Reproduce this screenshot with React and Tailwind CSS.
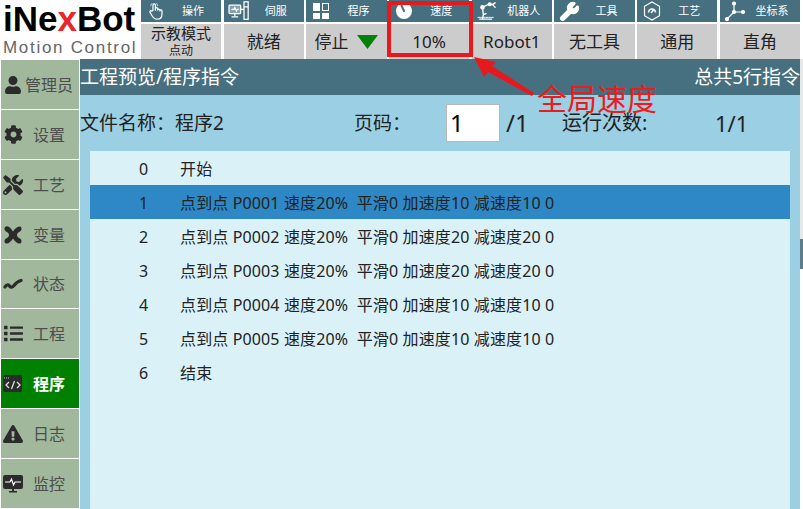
import React from 'react';
import { FaUser, FaCog, FaTools, FaExclamationTriangle, FaList } from 'react-icons/fa';
import { Wrench } from 'lucide-react';

const font = "font-['Noto_Sans','Noto_Sans_CJK_SC',sans-serif]";

const HandIcon = () => (
  <svg width="18" height="20" viewBox="0 0 24 24" fill="none" stroke="#fff" strokeWidth="1.6" strokeLinejoin="round" strokeLinecap="round">
    <path d="M8 11V4a1.6 1.6 0 0 1 3.2 0v7l0-2a1.5 1.5 0 0 1 3 0v2a1.5 1.5 0 0 1 3 0v1a1.4 1.4 0 0 1 2.8 0v4c0 4-2.5 7-6.5 7s-5-1.500-7-5l-2.500-4.500c-.8-1.500 1.200-2.700 2.300-1.300z" />
    <path d="M5 5a5 5 0 0 1 1.500-3M14 5a5 5 0 0 0-1-3" strokeWidth="1" />
  </svg>
);

const ServoIcon = () => (
  <svg width="22" height="20" viewBox="0 0 26 24" fill="none" stroke="#fff" strokeWidth="1.500">
    <rect x="1" y="5" width="14" height="10" rx="1" fill="#fff" fillOpacity=".35" />
    <path d="M4 10h3l1-2 2 4 1-2h2M8 15v3M4 19h8" />
    <rect x="19" y="1" width="5" height="21" />
    <path d="M19 7h5M15 10h4" />
  </svg>
);

const GridIcon = () => (
  <div className="grid grid-cols-2 gap-[2px] w-[16px] h-[16px]">
    <div className="bg-white" />
    <div className="border border-white" />
    <div className="bg-white" />
    <div className="bg-white" />
  </div>
);

const GaugeIcon = () => (
  <svg width="18" height="18" viewBox="0 0 18 18">
    <circle cx="9" cy="9" r="8" fill="#fff" />
    <path d="M9 9L6.500 3.500" stroke="#467080" strokeWidth="2" strokeLinecap="round" />
  </svg>
);

const RobotIcon = () => (
  <svg width="24" height="20" viewBox="0 0 26 22" fill="none" stroke="#fff" strokeWidth="1.500" strokeLinecap="round">
    <path d="M5 20h13M8 20l1-5 3-1M9 15L8 7l8-4 3 1M19 4l3 3M19 4l3-2" />
    <circle cx="8" cy="7" r="1.800" fill="#fff" />
    <circle cx="16" cy="3.500" r="1.500" fill="#fff" />
    <path d="M3 18h17" strokeDasharray="2 1" strokeWidth="1" />
  </svg>
);

const CraftIcon = () => (
  <svg width="18" height="20" viewBox="0 0 18 20" fill="none" stroke="#fff" strokeWidth="1.200">
    <path d="M9 1l7.500 4.300v9.400L9 19l-7.500-4.300V5.300z" />
    <path d="M5.500 11.500a3.500 3.500 0 1 1 7 0M8 12l2.500-3" strokeWidth="1.600" />
  </svg>
);

const AxisIcon = () => (
  <svg width="22" height="20" viewBox="0 0 22 20" fill="none" stroke="#fff" strokeWidth="1.200">
    <path d="M10 11V2M10 11h9M10 11l-7 7" />
    <circle cx="10" cy="2.500" r="1.500" fill="#fff" />
    <circle cx="19" cy="11" r="1.500" fill="#fff" />
    <circle cx="3" cy="18" r="1.500" fill="#fff" />
    <circle cx="10" cy="11" r="1.500" fill="#fff" />
  </svg>
);

const XIcon = () => (
  <svg width="20" height="20" viewBox="0 0 20 20" fill="#2b2b2b">
    <path d="M3 1.500c2.500-1 5 2 7 5 2-3 4.500-5.500 7-5 2 .5 2 4 0 5-2 .8-3 2-3 3.500s1 2.700 3 3.500c2 1 2 4.500 0 5-2.500.5-5-2-7-5-2 3-4.500 5.500-7 5-2-.5-2-4 0-5 2-.8 3-2 3-3.500s-1-2.700-3-3.500c-2-1-2-4.500 0-5z" />
  </svg>
);

const WaveIcon = () => (
  <svg width="20" height="12" viewBox="0 0 20 12" fill="none" stroke="#2b2b2b" strokeWidth="3.200" strokeLinecap="round">
    <path d="M2 9c1.500-2.500 3-2.500 4.500-1s3 1.500 4.500-.5 3-4 7-5" />
  </svg>
);

const CodeIcon = () => (
  <svg width="20" height="18" viewBox="0 0 20 18">
    <rect x="0" y="0" width="19" height="17" rx="1.500" fill="#2b2b2b" />
    <path d="M1 3h1M3 3h1M5 3h1" stroke="#ccc" strokeWidth="1" />
    <path d="M6 7l-3 3 3 3M14 7l3 3-3 3M11.500 6l-3 8" stroke="#ddd" strokeWidth="1.300" fill="none" />
  </svg>
);

const MonitorIcon = () => (
  <svg width="20" height="18" viewBox="0 0 20 18">
    <rect x="0" y="0" width="20" height="14" rx="2" fill="#2b2b2b" />
    <path d="M2 7h5l1.500-3 2 6 1.500-3h6" stroke="#fff" strokeWidth="1.200" fill="none" />
    <path d="M9 14h2v2h3v1.500H6V16h3z" fill="#2b2b2b" />
  </svg>
);

const tabs = [
  { icon: <HandIcon />, title: '操作', label: <div className="flex flex-col items-center"><span className="text-[15px] leading-[17px]">示教模式</span><span className="text-[12px] leading-[17px]">点动</span></div> },
  { icon: <ServoIcon />, title: '伺服', label: '就绪' },
  {
    icon: <GridIcon />,
    title: '程序',
    label: (
      <div className="flex items-center gap-[9px]">
        <span>停止</span>
        <svg width="21" height="14" viewBox="0 0 21 14"><path d="M0 0h21L10.500 14z" fill="#078007" /></svg>
      </div>
    ),
  },
  { icon: <GaugeIcon />, title: '速度', label: '10%' },
  { icon: <RobotIcon />, title: '机器人', label: 'Robot1' },
  { icon: <Wrench size={21} color="#fff" fill="#fff" />, title: '工具', label: '无工具' },
  { icon: <CraftIcon />, title: '工艺', label: '通用' },
  { icon: <AxisIcon />, title: '坐标系', label: '直角' },
];

const sideItems = [
  { icon: <FaUser size={18} color="#2b2b2b" />, label: '管理员' },
  { icon: <FaCog size={19} color="#2b2b2b" />, label: '设置' },
  { icon: <FaTools size={20} color="#2b2b2b" />, label: '工艺' },
  { icon: <XIcon />, label: '变量' },
  { icon: <WaveIcon />, label: '状态', short: true },
  { icon: <FaList size={19} color="#2b2b2b" />, label: '工程' },
  { icon: <CodeIcon />, label: '程序', active: true },
  { icon: <FaExclamationTriangle size={20} color="#2b2b2b" />, label: '日志' },
  { icon: <MonitorIcon />, label: '监控' },
];

const rows = [
  [0, '开始'],
  [1, '点到点 P0001 速度20%  平滑0 加速度10 减速度10 0'],
  [2, '点到点 P0002 速度20%  平滑0 加速度20 减速度20 0'],
  [3, '点到点 P0003 速度20%  平滑0 加速度20 减速度20 0'],
  [4, '点到点 P0004 速度20%  平滑0 加速度10 减速度10 0'],
  [5, '点到点 P0005 速度20%  平滑0 加速度10 减速度10 0'],
  [6, '结束'],
];

const App = () => {
  return (
    <div className={`relative w-[803px] h-[509px] overflow-hidden bg-white ${font}`}>
      {/* top bar */}
      <div className="flex h-[59px]">
        <div className="w-[141px] shrink-0 flex flex-col pl-[3px]">
          <div className="h-[38px] text-[35px] leading-[38px] font-bold text-black font-['Liberation_Sans',sans-serif] whitespace-nowrap">
            iNe<span className="text-[#e8262b]">x</span>Bot
          </div>
          <div className="text-[17px] leading-[20px] text-[#666] tracking-[1.7px] whitespace-nowrap font-['Liberation_Sans',sans-serif]">Motion Control</div>
        </div>
        <div className="w-[659px] grid grid-cols-8 gap-x-[2.5px]">
          {tabs.map((tab) => (
            <div key={tab.title} className="flex flex-col h-[59px]">
              <div className="h-[22px] bg-[#467080] flex items-center text-white text-[11px] pl-[3px]">
                <div className="w-[24px] shrink-0 flex justify-center">{tab.icon}</div>
                <span className="flex-1 text-center pr-[3px] whitespace-nowrap">{tab.title}</span>
              </div>
              <div className="mt-[2px] h-[35px] bg-[#cccccc] flex items-center justify-center text-[17px] text-[#222]">
                {tab.label}
              </div>
            </div>
          ))}
        </div>
      </div>

      <div className="flex h-[450px]">
        {/* side menu */}
        <div className="w-[80px] shrink-0 pl-[1px] flex flex-col">
          {sideItems.map((item) => (
            <div
              key={item.label + (item.active ? '1' : '')}
              className={`w-[78px] mt-[1px] flex items-center pl-[2px] ${item.short ? 'h-[48px]' : 'h-[49px]'} ${item.active ? 'bg-[#008000] text-white' : 'bg-[#a1b89d] text-[#4d4d4d]'}`}
            >
              <div className="w-[20px] shrink-0 flex justify-center">{item.icon}</div>
              <span className={`whitespace-nowrap text-[16px] ${item.label === '管理员' ? 'ml-[2px] text-[15px]' : 'ml-[10px]'} ${item.active ? 'font-bold' : ''}`}>{item.label}</span>
            </div>
          ))}
        </div>

        {/* main */}
        <div className="w-[720px] flex flex-col bg-[#9bcfe3]">
          <div className="h-[36px] bg-[#467080] text-white flex items-center justify-between text-[19px]">
            <span className="whitespace-nowrap">工程预览/程序指令</span>
            <span className="whitespace-nowrap">总共5行指令</span>
          </div>
          <div className="h-[56px] flex items-center text-[19px] text-[#222]">
            <span className="w-[95px] whitespace-nowrap">文件名称：</span>
            <span className="w-[179px]">程序2</span>
            <span className="w-[92px] whitespace-nowrap">页码：</span>
            <div className="w-[54px] h-[38px] bg-white border border-[#b8b8b8] pl-[3px] text-[24px] leading-[36px] text-black">1</div>
            <span className="w-[62px] pl-[6px] text-[24px]">/1</span>
            <span className="w-[153px] whitespace-nowrap text-[20px] leading-[22px]">运行次数:</span>
            <span className="text-[22px]">1/1</span>
          </div>
          <div className="mx-[10px] flex-1 bg-[#daf1f8]">
            {rows.map(([no, text]) => (
              <div key={no} className={`h-[34px] pt-[1px] flex items-center text-[16px] text-[#222] ${no === 1 ? 'bg-[#2e88c5]' : ''}`}>
                <span className="w-[90px] pl-[49px]">{no}</span>
                <span className="whitespace-pre tracking-[0.13px]">{text}</span>
              </div>
            ))}
          </div>
        </div>
        <div className="w-[3px] flex flex-col">
          <div className="h-[180px] bg-[#e8e8e8]" />
          <div className="h-[30px] bg-[#5e7d8a]" />
        </div>
      </div>

      {/* annotation over the screenshot */}
      <div className="absolute left-[387px] top-[1px] w-[86px] h-[56px] border-[4px] border-[#e8191c]" />
      <svg className="absolute left-[470px] top-[50px]" width="70" height="50" viewBox="0 0 70 50">
        <path d="M4 7L26 12 22 16 64 43 62 46 18 22 14 27z" fill="#e8191c" />
      </svg>
      <div className="absolute left-[537px] top-[84px] text-[30px] leading-[30px] text-[#f01a1a] whitespace-nowrap">全局速度</div>
    </div>
  );
};

export default App;
